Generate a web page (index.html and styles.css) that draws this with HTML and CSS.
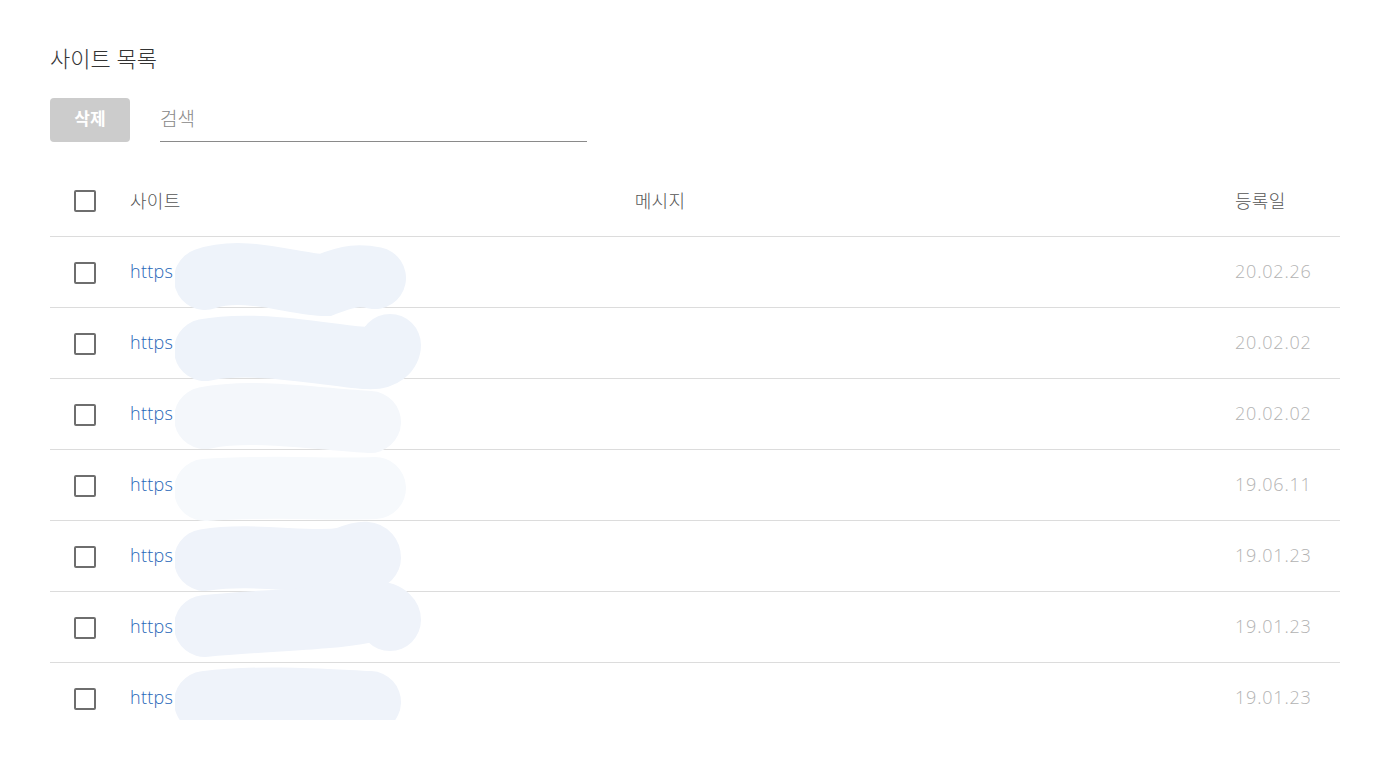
FILE: index.html
```html
<!DOCTYPE html>
<html lang="ko">
<head>
<meta charset="utf-8">
<title>사이트 목록</title>
<link rel="stylesheet" href="styles.css">
</head>
<body>
<main class="page">
  <h1 class="title">사이트 목록</h1>
  <div class="toolbar">
    <button class="btn-delete" disabled>삭제</button>
    <label class="search"><input type="text" placeholder="검색"></label>
  </div>
  <div class="table-wrap">
    <div class="row head">
      <div class="cell check"><span class="box"></span></div>
      <div class="cell site">사이트</div>
      <div class="cell msg">메시지</div>
      <div class="cell date"><span>등록일</span></div>
    </div>
    <div class="row"><div class="cell check"><span class="box"></span></div><div class="cell site"><a href="#">https</a></div><div class="cell msg"></div><div class="cell date"><span>20.02.26</span></div></div>
    <div class="row"><div class="cell check"><span class="box"></span></div><div class="cell site"><a href="#">https</a></div><div class="cell msg"></div><div class="cell date"><span>20.02.02</span></div></div>
    <div class="row"><div class="cell check"><span class="box"></span></div><div class="cell site"><a href="#">https</a></div><div class="cell msg"></div><div class="cell date"><span>20.02.02</span></div></div>
    <div class="row"><div class="cell check"><span class="box"></span></div><div class="cell site"><a href="#">https</a></div><div class="cell msg"></div><div class="cell date"><span>19.06.11</span></div></div>
    <div class="row"><div class="cell check"><span class="box"></span></div><div class="cell site"><a href="#">https</a></div><div class="cell msg"></div><div class="cell date"><span>19.01.23</span></div></div>
    <div class="row"><div class="cell check"><span class="box"></span></div><div class="cell site"><a href="#">https</a></div><div class="cell msg"></div><div class="cell date"><span>19.01.23</span></div></div>
    <div class="row"><div class="cell check"><span class="box"></span></div><div class="cell site"><a href="#">https</a></div><div class="cell msg"></div><div class="cell date"><span>19.01.23</span></div></div>
    <svg class="redact" width="300" height="490" viewBox="0 0 300 490">
      <g fill="none" stroke-linecap="round" stroke-width="62">
        <path d="M30 39 C70 25 120 45 150 45 C175 35 185 35 200 38" stroke="#eef3fa"/>
        <path d="M30 110 C80 100 150 115 190 118 C210 120 215 110 215 105" stroke="#eef3fa"/>
        <path d="M30 178 C80 168 150 180 195 182" stroke="#f4f7fb"/>
        <path d="M30 250 C90 245 160 250 200 248" stroke="#f6f9fc"/>
        <path d="M30 320 C80 312 140 325 170 318 C190 310 195 312 195 318" stroke="#eff3fa"/>
        <path d="M30 386 C90 380 150 380 190 372 C205 370 215 375 215 380" stroke="#eff3fa"/>
        <path d="M30 462 C90 455 150 460 195 462" stroke="#eff3fa"/>
      </g>
    </svg>
  </div>
</main>
</body>
</html>
```
FILE: styles.css
```css
* { box-sizing: border-box; }
html, body { margin: 0; padding: 0; background: #fff; }
body {
  font-family: "Open Sans", "Noto Sans CJK KR", sans-serif;
  font-weight: 300;
  color: #333;
}
.page {
  padding: 43px 56px 0 50px;
}
.title {
  margin: 0;
  font-size: 22px;
  font-weight: 300;
  line-height: 30px;
  color: #333;
}
.toolbar {
  display: flex;
  align-items: flex-end;
  gap: 30px;
  margin-top: 24px;
}
.btn-delete {
  width: 80px;
  height: 44px;
  border: none;
  border-radius: 4px;
  background: #cccccc;
  color: #fff;
  font-family: inherit;
  font-size: 17px;
  font-weight: 700;
  padding: 0 0 5px 0;
}
.search input {
  display: block;
  width: 427px;
  height: 45px;
  border: none;
  border-bottom: 1px solid #8a8a8a;
  outline: none;
  padding: 0 0 0 0;
  font-family: inherit;
  font-weight: 300;
  font-size: 19px;
  color: #333;
  background: transparent;
}
.search input::placeholder { color: #888; }
.table-wrap {
  position: relative;
  margin-top: 22px;
  height: 556px;
  overflow: hidden;
}
.row {
  display: grid;
  grid-template-columns: 70px 340px 400px 1fr;
  height: 71px;
  border-bottom: 1px solid #dcdcdc;
  align-items: center;
  font-size: 18px;
  letter-spacing: 0.3px;
}
.row.head { height: 73px; color: #555; }
.cell.check { padding-left: 24px; display: flex; align-items: center; }
.box {
  display: block;
  width: 22px;
  height: 22px;
  margin-top: 2px;
  border: 2px solid #6e6e6e;
  border-radius: 2px;
}
.cell.site { padding-left: 10px; }
.row:not(.head) .cell.site, .row:not(.head) .cell.date { margin-top: -2px; }
.cell.site a { color: #1f66b8; text-decoration: none; }
.cell.msg { text-align: center; }
.cell.date {
  display: flex;
  justify-content: flex-end;
  padding-right: 29px;
  color: #b3b3b3;
}
.row:not(.head) .cell.date span { letter-spacing: 0.8px; }
.row.head .cell.date { color: #555; }
.cell.date span { display: block; width: 76px; white-space: nowrap; }
.redact {
  position: absolute;
  left: 125px;
  top: 76px;
}
```
